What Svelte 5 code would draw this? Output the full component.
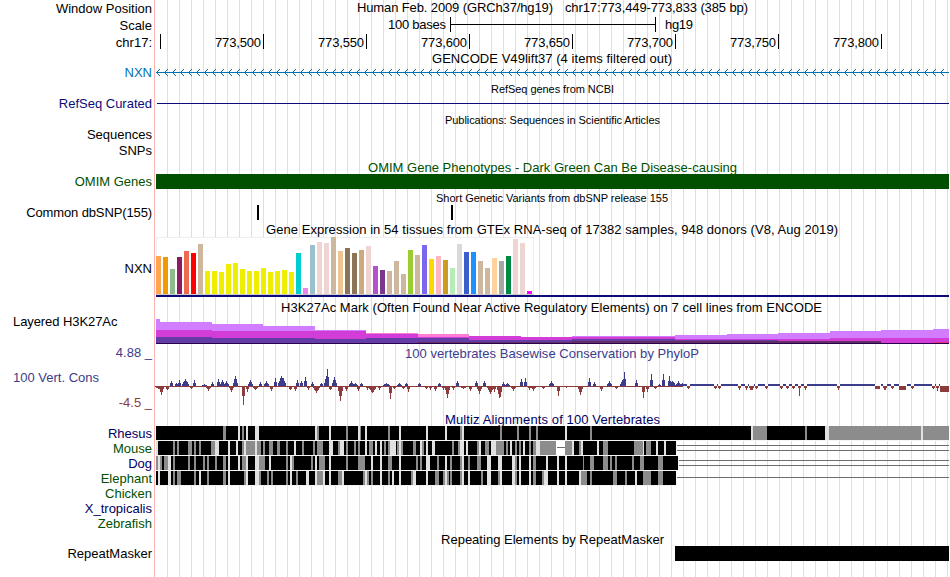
<script lang="ts">
	type Caption = { text: string; x: number; width: number; y: number; small?: boolean; tone?: string };
	type Segment = { x: number; width: number; shade: string };

	// All x values are image pixels; the data area runs from 156 to 949
	const left = 156;
	const right = 949;

	const rulerTicks = [263, 366, 469, 572, 675, 778, 881];
	const arrows = Array.from({ length: 99 }, (_, i) => 157 + i * 8);

	const captions: Record<string, Caption> = {
		gencode: { text: 'GENCODE V49lift37 (4 items filtered out)', x: 432, width: 240, y: 63 },
		refseq: { text: 'RefSeq genes from NCBI', x: 491, width: 123, y: 93, small: true },
		pubs: {
			text: 'Publications: Sequences in Scientific Articles',
			x: 445,
			width: 215,
			y: 124,
			small: true
		},
		omim: {
			text: 'OMIM Gene Phenotypes - Dark Green Can Be Disease-causing',
			x: 368,
			width: 369,
			y: 172,
			tone: 'green'
		},
		dbsnp: {
			text: 'Short Genetic Variants from dbSNP release 155',
			x: 436,
			width: 232,
			y: 202,
			small: true
		},
		gtex: {
			text: 'Gene Expression in 54 tissues from GTEx RNA-seq of 17382 samples, 948 donors (V8, Aug 2019)',
			x: 266,
			width: 572,
			y: 234
		},
		h3k27: {
			text: 'H3K27Ac Mark (Often Found Near Active Regulatory Elements) on 7 cell lines from ENCODE',
			x: 281,
			width: 541,
			y: 312
		},
		phylop: {
			text: '100 vertebrates Basewise Conservation by PhyloP',
			x: 405,
			width: 294,
			y: 358,
			tone: 'cons'
		},
		multiz: {
			text: 'Multiz Alignments of 100 Vertebrates',
			x: 445,
			width: 215,
			y: 424,
			tone: 'navy'
		},
		repeats: { text: 'Repeating Elements by RepeatMasker', x: 441, width: 223, y: 544 }
	};

	// GTEx: [color, bar height]
	const tissues: [string, number][] = [
		['#ffa54f', 38],
		['#ee9a00', 37],
		['#8fbc8f', 25],
		['#8b1c62', 37],
		['#ee6a50', 43],
		['#ff0000', 41],
		['#cdb79e', 50],
		...[23, 23, 22, 30, 31, 25, 23, 23, 26, 22, 23, 24, 22].map(
			(h): [string, number] => ['#eeee00', h]
		),
		['#00cdcd', 41],
		['#ee82ee', 6],
		['#9ac0cd', 49],
		['#eed5d2', 52],
		['#eed5d2', 51],
		['#cdb79e', 57],
		['#eec591', 43],
		['#8b7355', 46],
		['#8b7355', 41],
		['#cdaa7d', 44],
		['#eed5d2', 48],
		['#b452cd', 28],
		['#7a378b', 24],
		['#cdb79e', 23],
		['#cdb79e', 33],
		['#cdb79e', 20],
		['#9acd32', 44],
		['#cdb79e', 39],
		['#7a67ee', 49],
		['#ffd700', 35],
		['#ffb6c1', 38],
		['#cd9b1d', 34],
		['#b4eeb4', 26],
		['#d9d9d9', 50],
		['#3a5fcd', 42],
		['#1e90ff', 42],
		['#cdb79e', 33],
		['#cdb79e', 26],
		['#ffd39b', 36],
		['#a6a6a6', 33],
		['#008b45', 38],
		['#eed5d2', 55],
		['#eed5d2', 51],
		['#ff00ff', 3]
	];

	// H3K27Ac layers, back to front: [start x, top y] steps
	const layers = [
		{
			color: '#d27dff',
			steps: [[156, 319], [160, 322], [212, 324], [263, 326], [315, 330], [366, 333], [418, 337], [572, 336], [675, 335], [727, 334], [778, 333], [830, 331], [881, 330], [933, 329]]
		},
		{ color: '#ff7dd2', steps: [[366, 333], [418, 334], [469, 343]] },
		{
			color: '#d23cd7',
			steps: [[156, 330], [212, 331], [366, 334], [418, 337], [469, 336], [521, 337], [675, 339], [830, 338]]
		},
		{
			color: '#643ca5',
			steps: [[156, 337], [212, 338], [315, 339], [366, 338], [469, 340], [521, 340], [572, 339], [675, 340], [778, 343]]
		},
		{
			color: '#642d64',
			steps: [[418, 342], [572, 341], [881, 343]]
		},
		{ color: '#e63278', steps: [[933, 342]] }
	];

	function stepPath(steps: number[][]): string {
		let d = `M${steps[0][0]} 343`;
		for (const [x, y] of steps) d += `H${x}V${y}`;
		return d + `H${right}V343Z`;
	}

	// PhyloP spikes: [x, score in px, half width]
	const spikes: number[][] = [
		[158, -3, 3], [161, -9, 2], [167, -4, 2], [171, 5, 1], [176, 3, 1], [179, 6, 1], [185, 7, 3], [191, -3, 2],
		[194, 6, 1], [204, 2, 2], [208, -5, 2], [212, 4, 1], [218, 7, 1], [222, 6, 2], [226, 5, 2], [231, -6, 2],
		[235, 10, 2], [243, -19, 1], [247, -6, 1], [250, 6, 2], [255, -4, 3], [260, 4, 1], [266, 5, 2], [271, -5, 1],
		[275, 8, 1], [281, 10, 3], [283, 8, 2], [290, -4, 2], [295, -5, 1], [297, 6, 1], [301, 5, 1], [305, 9, 1],
		[308, -4, 1], [312, 4, 1], [316, -7, 3], [321, 3, 1], [326, 10, 2], [327, 17, 1], [330, -4, 2], [334, 9, 2],
		[340, -15, 2], [346, -5, 1], [351, 5, 2], [355, 3, 2], [358, -5, 1], [361, 3, 1], [367, -4, 1], [372, -7, 4],
		[379, -4, 1], [386, 3, 3], [390, -13, 1], [394, -3, 1], [399, 3, 2], [403, -3, 1], [406, 3, 1], [408, -6, 1],
		[419, 3, 1], [426, -3, 1], [430, -4, 1], [435, -5, 1], [439, 3, 1], [443, -4, 1], [447, -12, 2], [453, -4, 1],
		[457, 5, 1], [463, -3, 3], [470, -5, 1], [476, 5, 1], [479, -8, 2], [484, 5, 1], [490, -8, 3], [494, -6, 1],
		[499, -12, 2], [500, -11, 1], [503, 4, 1], [507, 3, 2], [513, -5, 2], [521, 7, 1], [525, 8, 1], [529, -4, 1],
		[533, -5, 2], [543, -3, 2], [551, 5, 2], [558, -10, 1], [566, -2, 1], [580, -9, 2], [589, 8, 1], [594, 4, 1],
		[601, -5, 1], [609, 5, 2], [616, -3, 1], [622, 6, 2], [624, 14, 1], [636, 6, 1], [643, -12, 1], [647, -6, 1],
		[651, 12, 1], [655, -3, 1], [659, 2, 1], [663, 12, 1], [669, 10, 1], [672, 5, 3], [678, 5, 2], [682, 3, 3]
	];

	// Negative dips in the flat stretch right of 685: [x, depth, width]
	const dips: number[][] = [
		[688, 3, 2], [715, 3, 2], [719, 3, 2], [739, 4, 2], [746, 4, 2], [750, 4, 4], [756, 3, 2], [766, 3, 2],
		[781, 3, 2], [787, 3, 2], [793, 3, 2], [799, 10, 2], [805, 4, 2], [838, 4, 2], [876, 3, 5], [884, 4, 3],
		[892, 3, 2], [900, 4, 7], [912, 3, 2], [933, 3, 2], [937, 5, 2], [941, 6, 9]
	];

	const columns = spikes.flatMap(([x, score, half]) => {
		const list: { x: number; h: number; up: boolean }[] = [];
		for (let dx = -half; dx <= half; dx++) {
			const h = Math.round(Math.abs(score) * (1 - Math.abs(dx) / (half + 1)));
			if (h > 0) list.push({ x: x + dx, h, up: score > 0 });
		}
		return list;
	});

	// Shaded segments over a black bar: g = grey, l = light, w = gap; width defaults to 2
	function parse(source: string): Segment[] {
		return source.split(' ').map((item) => {
			const [x, width] = item.slice(1).split(',').map(Number);
			return { x, width: width || 2, shade: item[0] };
		});
	}

	const species = [
		{
			name: 'Rhesus',
			tone: 'navy',
			top: 426,
			end: 949,
			lines: [],
			segments: parse(
				'g223,3 l238 g242 l246 l255,4 l315 g317 l329 g346 l358 g360,1 l365 g388 l399 l426 l445 g460 l462 g500 g517 g529 g536 l565 g590 l751 g753,14 g805 l825,4 g829,92 l921 g923,26'
			)
		},
		{
			name: 'Mouse',
			tone: 'green',
			top: 441,
			end: 676,
			lines: [445, 450],
			segments: parse(
				'l156 g173 g177 g188,4 g194 g199 g211,4 l215,4 l228 l236 g242 l244 g246 g248,7 l255 g257,4 g263 g269,4 g277,3 g286 l294 g302 g313 g317,6 l329,4 g338 l340,4 g346 g354 g358 l365 g369,4 l375 l380 g384 g388 l390,6 g397 l399 g401 g413,3 l420 g422 l426 l432,3 g452 g458 l460,4 l466 g477 l479 g485,4 l491,5 g496,8 g506 l510 g515 g519 l523 g529 g533,3 l536,4 g540,16 w556,9 g565,7 l572 g579 l581 l597 g603,5 g634,9 l643,1 g646,5 l656 l664'
			)
		},
		{
			name: 'Dog',
			tone: 'navy',
			top: 456,
			end: 678,
			lines: [460, 465],
			segments: parse(
				'g156 l158 g160 g164,4 l168,3 g173 g188 g194 g203 g207 g215 g223,3 l228 l238 g242,4 l246 l255,4 g259,6 l269 g286 l290 g292 g311 l315 g319,6 l329 g346 g358,7 l371 l380 g388,4 l399 g416 g420 l426,4 g437 l445 g450 g460 l462 g468 g477,4 l487,4 l498,4 l512,3 g515 l519 l529 g533,3 l546 l557 l565 g583,1 g590,4 g603,5 g610 g615 g632 g640,4 g658,5'
			)
		},
		{
			name: 'Elephant',
			tone: 'green',
			top: 471,
			end: 676,
			lines: [477],
			segments: parse(
				'l158 l168,3 g173 g177,4 g194 l199 g207 g223,3 l228 g244 l246 l255,4 g259 g267 g271 g286 l290 g296 l306,3 l315 g317,6 l323 l329 g338,4 l342 g363 l365 g367 g371 l380 g388 l392 l399 g411 l413,3 l426 g435,4 g443 l445 g447 g450 g460 l462 l468 g481 l487,4 g498 l500 l512,3 g515 l519 l529 g533,3 g542 l544,4 l557 l565 l579 g581,6 g590 g613,4 g625 l635 g643,8 g658,5'
			)
		},
		{ name: 'Chicken', tone: 'green', top: 486, end: 0, lines: [], segments: [] },
		{ name: 'X_tropicalis', tone: 'navy', top: 501, end: 0, lines: [], segments: [] },
		{ name: 'Zebrafish', tone: 'green', top: 516, end: 0, lines: [], segments: [] }
	];
</script>

{#snippet line(c: Caption)}
	<text class={c.tone ?? ''} class:small={c.small} x={c.x} y={c.y} textLength={c.width}>{c.text}</text>
{/snippet}

{#snippet captionRow(top: number, height: number, c: Caption)}
	<div class="row" style:height="{height}px">
		<div class="label"></div>
		<svg class="data" viewBox="{left} {top} 794 {height}">{@render line(c)}</svg>
	</div>
{/snippet}

<div class="browser">
	<div class="row" style:height="18px">
		<div class="label first">Window Position</div>
		<svg class="data" viewBox="156 0 794 18">
			<text x="357" y="12" textLength="196">Human Feb. 2009 (GRCh37/hg19)</text>
			<text x="565" y="12" textLength="183">chr17:773,449-773,833 (385 bp)</text>
		</svg>
	</div>

	<div class="row" style:height="17px">
		<div class="label">Scale</div>
		<svg class="data" viewBox="156 18 794 17">
			<text x="388" y="29" textLength="58">100 bases</text>
			<rect x="450" y="17" width="1" height="15" />
			<rect x="450" y="24" width="206" height="1" />
			<rect x="655" y="17" width="1" height="15" />
			<text x="665" y="29" textLength="28">hg19</text>
		</svg>
	</div>

	<div class="row" style:height="16px">
		<div class="label">chr17:</div>
		<svg class="data" viewBox="156 35 794 16">
			<rect x="160" y="34" width="1" height="15" />
			{#each rulerTicks as x, i}
				<text x={x - 48} y="47" textLength="46">{`773,${500 + i * 50}`}</text>
				<rect {x} y="34" width="1" height="15" />
			{/each}
		</svg>
	</div>

	{@render captionRow(51, 14, captions.gencode)}
	<div class="row" style:height="16px">
		<div class="label gene">NXN</div>
		<svg class="data" viewBox="156 65 794 16">
			<rect class="gene" x="156" y="72" width="793" height="1" />
			{#each arrows as x}
				<path class="arrow" d="M{x + 3} 69L{x - 0.5} 72.5L{x + 3} 76" />
			{/each}
		</svg>
	</div>

	{@render captionRow(81, 15, captions.refseq)}
	<div class="row" style:height="16px">
		<div class="label refseq">RefSeq Curated</div>
		<svg class="data" viewBox="156 96 794 16">
			<rect class="refseq-line" x="157" y="103" width="792" height="1" />
		</svg>
	</div>

	{@render captionRow(112, 15, captions.pubs)}
	<div class="row" style:height="16px">
		<div class="label">Sequences</div>
	</div>
	<div class="row" style:height="16px">
		<div class="label">SNPs</div>
	</div>

	{@render captionRow(159, 15, captions.omim)}
	<div class="row" style:height="16px">
		<div class="label green">OMIM Genes</div>
		<svg class="data" viewBox="156 174 794 16">
			<rect class="green" x="156" y="174" width="793" height="15" />
		</svg>
	</div>

	{@render captionRow(190, 15, captions.dbsnp)}
	<div class="row" style:height="16px">
		<div class="label tight">Common dbSNP(155)</div>
		<svg class="data" viewBox="156 205 794 16">
			<rect x="257" y="205" width="2" height="15" />
			<rect x="451" y="205" width="2" height="15" />
		</svg>
	</div>

	{@render captionRow(221, 15, captions.gtex)}
	<div class="row" style:height="62px">
		<div class="label gtex">NXN</div>
		<svg class="data" viewBox="156 236 794 62">
			<rect class="frame" x="156" y="237" width="378" height="58" />
			<rect class="paper" x="157" y="238" width="376" height="56" />
			<rect class="floor" x="156" y="294" width="378" height="1" />
			{#each tissues as [color, height], i}
				<rect x={left + i * 7} y={294 - height} width="5" {height} fill={color} />
			{/each}
			<rect class="base" x="156" y="295" width="793" height="2" />
		</svg>
	</div>

	{@render captionRow(298, 16, captions.h3k27)}
	<div class="row" style:height="31px">
		<div class="label wide">Layered H3K27Ac</div>
		<svg class="data" viewBox="156 314 794 31">
			{#each layers as layer}
				<path d={stepPath(layer.steps)} fill={layer.color} />
			{/each}
			<rect class="h3k-base" x="156" y="343" width="793" height="1" />
		</svg>
	</div>

	<div class="row" style:height="66px">
		<div class="label scale">
			<span class="cons">4.88 _</span>
			<span class="cons name">100 Vert. Cons</span>
			<span class="neg">-4.5 _</span>
		</div>
		<svg class="data" viewBox="156 345 794 66">
			{@render line(captions.phylop)}
			<rect class="neg" x="156" y="386" width="527" height="1" />
			<rect class="cons" x="683" y="384" width="257" height="2" />
			{#each columns as c}
				<rect class={c.up ? 'cons' : 'neg'} x={c.x} y={c.up ? 386 - c.h : 386} width="1" height={c.h} />
			{/each}
			{#each dips as [x, depth, width]}
				<rect class="paper" x={x - 1} y="384" width={width + 1} height="2" />
				<rect class="neg" x={x - 1} y="386" width={width + (width < 5 ? 1 : 0)} height="2" />
				<rect class="neg" x={width < 5 ? x : x - 1} y="386" width={width < 5 ? width - 1 : width} height={depth} />
			{/each}
		</svg>
	</div>

	{@render captionRow(411, 15, captions.multiz)}
	{#each species as s}
		<div class="row" style:height="15px">
			<div class="label {s.tone}">{s.name}</div>
			<svg class="data" viewBox="156 {s.top} 794 15">
				{#if s.end}
					<rect class="gap" x="156" y={s.top} width={s.end - 155} height="15" />
					<rect x="156" y={s.top} width={s.end - left} height="14" />
				{/if}
				{#each s.segments as seg}
					<rect class="seg-{seg.shade}" x={seg.x} y={s.top} width={seg.width} height="14" />
					{#if seg.shade === 'w'}
						<rect class="seg-line" x={seg.x + 1} y={s.top + 6} width={seg.width - 1} height="1" />
					{/if}
				{/each}
				{#each s.lines as y}
					<rect class="seg-line" x={s.end + 1} {y} width={right - s.end - 1} height="1" />
				{/each}
			</svg>
		</div>
	{/each}

	{@render captionRow(531, 15, captions.repeats)}
	<div class="row" style:height="31px">
		<div class="label">RepeatMasker</div>
		<svg class="data" viewBox="156 546 794 31">
			<rect x="675" y="546" width="274" height="15" />
		</svg>
	</div>
</div>

<style>
	:global(body) {
		background: #fff;
	}

	.browser {
		width: 949px;
		height: 577px;
		overflow: hidden;
		font-family: 'Liberation Sans', Arial, sans-serif;
		font-size: 13px;
		line-height: 16px;
		color: #000;
		background:
			linear-gradient(#ffb4b4, #ffb4b4) 154px 0 / 1px 100% no-repeat,
			repeating-linear-gradient(to right, transparent 0 11px, #dcdcfa 11px 12px) 156px 0 no-repeat;
	}

	.row {
		display: grid;
		grid-template-columns: 152px 794px;
		grid-template-rows: 100%;
		column-gap: 4px;
	}

	.label {
		text-align: right;
		white-space: nowrap;
	}

	.label.first {
		padding-top: 1px;
	}

	.label.gtex {
		padding-top: 25px;
	}

	.label.tight {
		letter-spacing: -0.12px;
	}

	.label.wide {
		padding-left: 13px;
		text-align: left;
		letter-spacing: -0.08px;
	}

	.label.scale {
		display: flex;
		flex-direction: column;
		gap: 9px;
	}

	.label .name {
		padding-left: 13px;
		text-align: left;
	}

	.data {
		display: block;
		width: 794px;
		height: 100%;
		overflow: visible;
		shape-rendering: crispEdges;
	}

	.small {
		font-size: 11px;
	}

	.gene {
		color: #0072b2;
		fill: #0072b2;
	}

	.arrow {
		fill: none;
		stroke: #0072b2;
		stroke-width: 1;
		shape-rendering: auto;
	}

	.refseq {
		color: #0c0c78;
	}

	.refseq-line,
	.base {
		fill: #0c0c78;
	}

	.green {
		color: #005000;
		fill: #005000;
	}

	.navy {
		color: #000064;
		fill: #000064;
	}

	.cons {
		color: #3c3c8c;
		fill: #3c3c8c;
	}

	.neg {
		color: #8c3c3c;
		fill: #8c3c3c;
	}

	.frame {
		fill: #eee;
	}

	.floor {
		fill: #ccc;
	}

	.paper,
	.seg-w {
		fill: #fff;
	}

	.h3k-base {
		fill: #280050;
	}

	.gap {
		fill: #f4f4f4;
	}

	.seg-g {
		fill: #8c8c8c;
	}

	.seg-l {
		fill: #e1e1e1;
	}

	.seg-line {
		fill: #6e6e6e;
	}
</style>
